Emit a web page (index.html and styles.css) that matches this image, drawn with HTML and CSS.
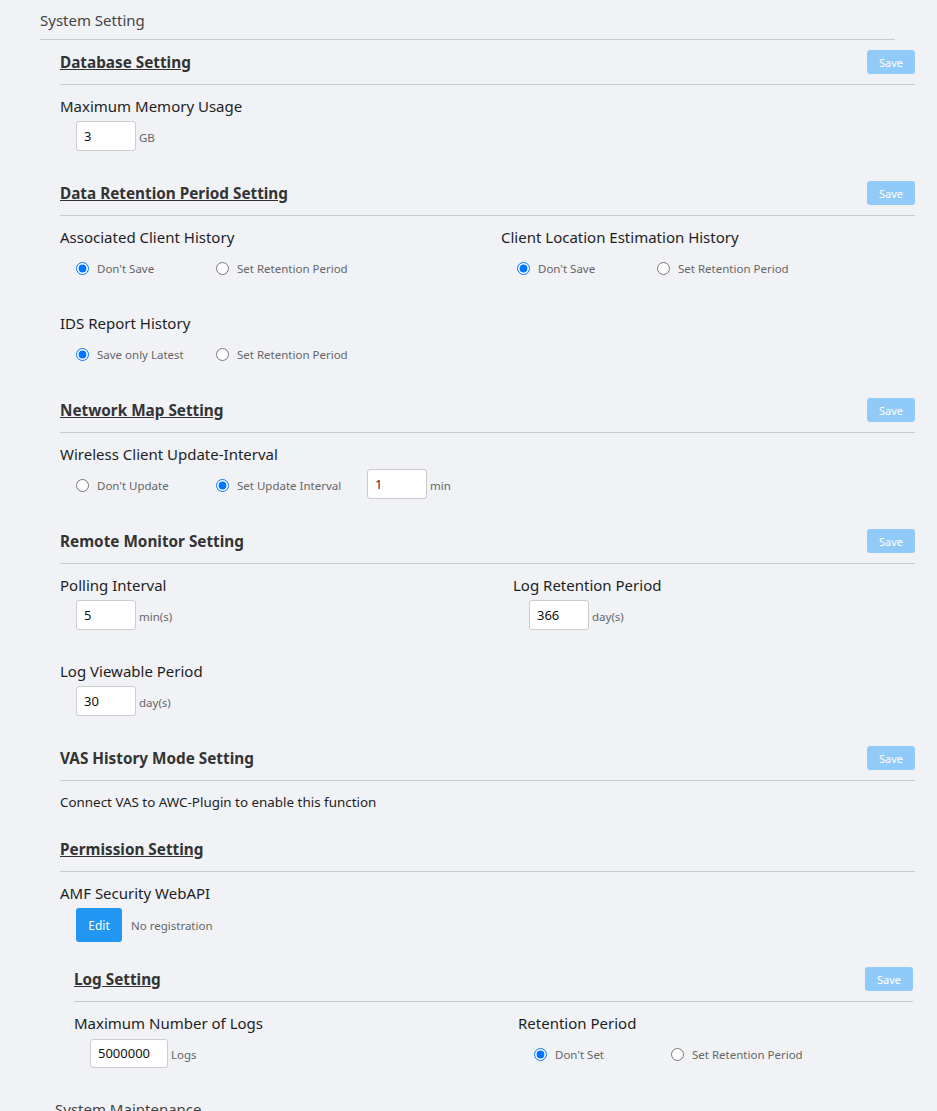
FILE: index.html
```html
<!DOCTYPE html>
<html lang="en">
<head>
  <meta charset="UTF-8">
  <meta name="viewport" content="width=device-width, initial-scale=1.0">
  <title>System Setting</title>
  <link rel="stylesheet" href="styles.css">
</head>
<body>

  <div class="page">
    <h2 class="page-title">System Setting</h2>

    <div class="settings">

      <!-- database -->
      <section class="setting">
        <div class="setting-head">
          <h3 class="setting-title linked">Database Setting</h3>
          <button class="btn-save">Save</button>
        </div>
        <div class="setting-body">
          <div class="field">
            <div class="field-label">Maximum Memory Usage</div>
            <div class="field-control">
              <input class="num" type="text" value="3">
              <span class="unit">GB</span>
            </div>
          </div>
        </div>
      </section>

      <!-- retention -->
      <section class="setting">
        <div class="setting-head">
          <h3 class="setting-title linked">Data Retention Period Setting</h3>
          <button class="btn-save">Save</button>
        </div>
        <div class="setting-body">
          <div class="cols cols-retention">
            <div class="field">
              <div class="field-label">Associated Client History</div>
              <div class="field-control">
                <label class="option"><input type="radio" name="assoc" checked>Don't Save</label>
                <label class="option"><input type="radio" name="assoc">Set Retention Period</label>
              </div>
            </div>
            <div class="field">
              <div class="field-label">Client Location Estimation History</div>
              <div class="field-control">
                <label class="option"><input type="radio" name="location" checked>Don't Save</label>
                <label class="option"><input type="radio" name="location">Set Retention Period</label>
              </div>
            </div>
          </div>
          <div class="field">
            <div class="field-label">IDS Report History</div>
            <div class="field-control">
              <label class="option"><input type="radio" name="ids" checked>Save only Latest</label>
              <label class="option"><input type="radio" name="ids">Set Retention Period</label>
            </div>
          </div>
        </div>
      </section>

      <!-- network map -->
      <section class="setting">
        <div class="setting-head">
          <h3 class="setting-title linked">Network Map Setting</h3>
          <button class="btn-save">Save</button>
        </div>
        <div class="setting-body">
          <div class="field">
            <div class="field-label">Wireless Client Update-Interval</div>
            <div class="field-control">
              <label class="option"><input type="radio" name="interval">Don't Update</label>
              <label class="option"><input type="radio" name="interval" checked>Set Update Interval</label>
              <input class="num interval" type="text" value="1">
              <span class="unit">min</span>
            </div>
          </div>
        </div>
      </section>

      <!-- remote monitor -->
      <section class="setting">
        <div class="setting-head">
          <h3 class="setting-title">Remote Monitor Setting</h3>
          <button class="btn-save">Save</button>
        </div>
        <div class="setting-body">
          <div class="cols cols-monitor">
            <div class="field">
              <div class="field-label">Polling Interval</div>
              <div class="field-control">
                <input class="num" type="text" value="5">
                <span class="unit">min(s)</span>
              </div>
            </div>
            <div class="field">
              <div class="field-label">Log Retention Period</div>
              <div class="field-control">
                <input class="num" type="text" value="366">
                <span class="unit">day(s)</span>
              </div>
            </div>
          </div>
          <div class="field">
            <div class="field-label">Log Viewable Period</div>
            <div class="field-control">
              <input class="num" type="text" value="30">
              <span class="unit">day(s)</span>
            </div>
          </div>
        </div>
      </section>

      <!-- vas -->
      <section class="setting">
        <div class="setting-head">
          <h3 class="setting-title">VAS History Mode Setting</h3>
          <button class="btn-save">Save</button>
        </div>
        <div class="setting-body">
          <p class="note">Connect VAS to AWC-Plugin to enable this function</p>
        </div>
      </section>

      <!-- permission -->
      <section class="setting">
        <div class="setting-head">
          <h3 class="setting-title linked">Permission Setting</h3>
        </div>
        <div class="setting-body">
          <div class="field-label">AMF Security WebAPI</div>
          <div class="field-control tall">
            <button class="btn-edit">Edit</button>
            <span class="status">No registration</span>
          </div>

          <!-- log setting lives inside permission -->
          <section class="setting setting-sub">
            <div class="setting-head">
              <h3 class="setting-title linked">Log Setting</h3>
              <button class="btn-save">Save</button>
            </div>
            <div class="setting-body">
              <div class="cols cols-log">
                <div class="field">
                  <div class="field-label">Maximum Number of Logs</div>
                  <div class="field-control">
                    <input class="num wide" type="text" value="5000000">
                    <span class="unit">Logs</span>
                  </div>
                </div>
                <div class="field">
                  <div class="field-label">Retention Period</div>
                  <div class="field-control">
                    <label class="option"><input type="radio" name="logret" checked>Don't Set</label>
                    <label class="option"><input type="radio" name="logret">Set Retention Period</label>
                  </div>
                </div>
              </div>
            </div>
          </section>
        </div>
      </section>

    </div>

    <h2 class="page-title sub">System Maintenance</h2>
  </div>

</body>
</html>
```

FILE: styles.css
```css
  body {
      margin: 0;
      background: #f0f2f6;
      font-family: "Noto Sans", "Open Sans", sans-serif;
      color: #1e1e1e;
  }

  .page {
      width: 855px;
      margin-left: 40px;
      padding-top: 10px;
  }

  .page-title {
      margin: 0;
      padding-bottom: 9px;
      border-bottom: 1px solid #c9cacd;
      font-size: 15px;
      line-height: 20px;
      font-weight: normal;
      color: #444;
  }
  .page-title.sub {
      margin: 0 0 0 15px;
      border: none;
  }

  .settings {
      width: 855px;
      margin-left: 20px;
      padding-top: 10px;
  }

  .setting-head {
      display: flex;
      align-items: center;
      justify-content: space-between;
      min-height: 24px;
      padding-bottom: 10px;
      border-bottom: 1px solid #c9cacd;
  }
  .setting-title {
      margin: 0;
      font-size: 15.3px;
      font-weight: bold;
      color: #333;
  }
  .setting-title.linked {
      text-decoration: underline;
  }

  .setting-body {
      padding-top: 11px;
  }

  .btn-save {
      width: 48px;
      height: 24px;
      padding: 0;
      border: none;
      border-radius: 3px;
      background: #90caf9;
      color: #fff;
      font-family: inherit;
      font-size: 11px;
  }

  .field {
      margin-bottom: 30px;
  }
  .field-label {
      font-size: 15px;
      line-height: 20px;
  }
  .field-control {
      display: flex;
      align-items: center;
      height: 30px;
      margin-top: 5px;
      padding-left: 16px;
  }
  .field-control.tall {
      height: 34px;
  }

  .cols {
      display: grid;
      margin-bottom: 1px;
  }
  .cols-retention {
      grid-template-columns: 441px 1fr;
  }
  .cols-monitor {
      grid-template-columns: 453px 1fr;
  }
  .cols-log {
      grid-template-columns: 444px 1fr;
  }

  .option {
      display: flex;
      align-items: center;
      gap: 8px;
      width: 140px;
      padding-top: 2px;
      font-size: 11.5px;
      color: #666;
  }
  .option input {
      width: 13px;
      height: 13px;
      margin: 0;
  }
  .cols-log .option {
      width: 137px;
  }

  .num {
      box-sizing: border-box;
      width: 60px;
      height: 30px;
      padding: 0 7px;
      border: 1px solid #ccc;
      border-radius: 3px;
      background: #fff;
      font-family: inherit;
      font-size: 13px;
      color: #111;
  }
  .num.interval {
      margin-left: 11px;
      color: #6e0c24;
  }
  .num.wide {
      width: 78px;
      height: 29px;
  }

  .unit {
      margin-left: 3px;
      padding-top: 2px;
      font-size: 11.5px;
      color: #666;
  }

  .note {
      margin: 0 0 25px;
      font-size: 13.4px;
      line-height: 20px;
  }

  .btn-edit {
      width: 46px;
      height: 34px;
      padding: 0;
      border: none;
      border-radius: 3px;
      background: #2196f3;
      color: #fff;
      font-family: inherit;
      font-size: 12px;
  }
  .status {
      margin-left: 9px;
      font-size: 11.5px;
      color: #666;
  }

  .setting-sub {
      margin: 25px 2px 0 14px;
  }
```
